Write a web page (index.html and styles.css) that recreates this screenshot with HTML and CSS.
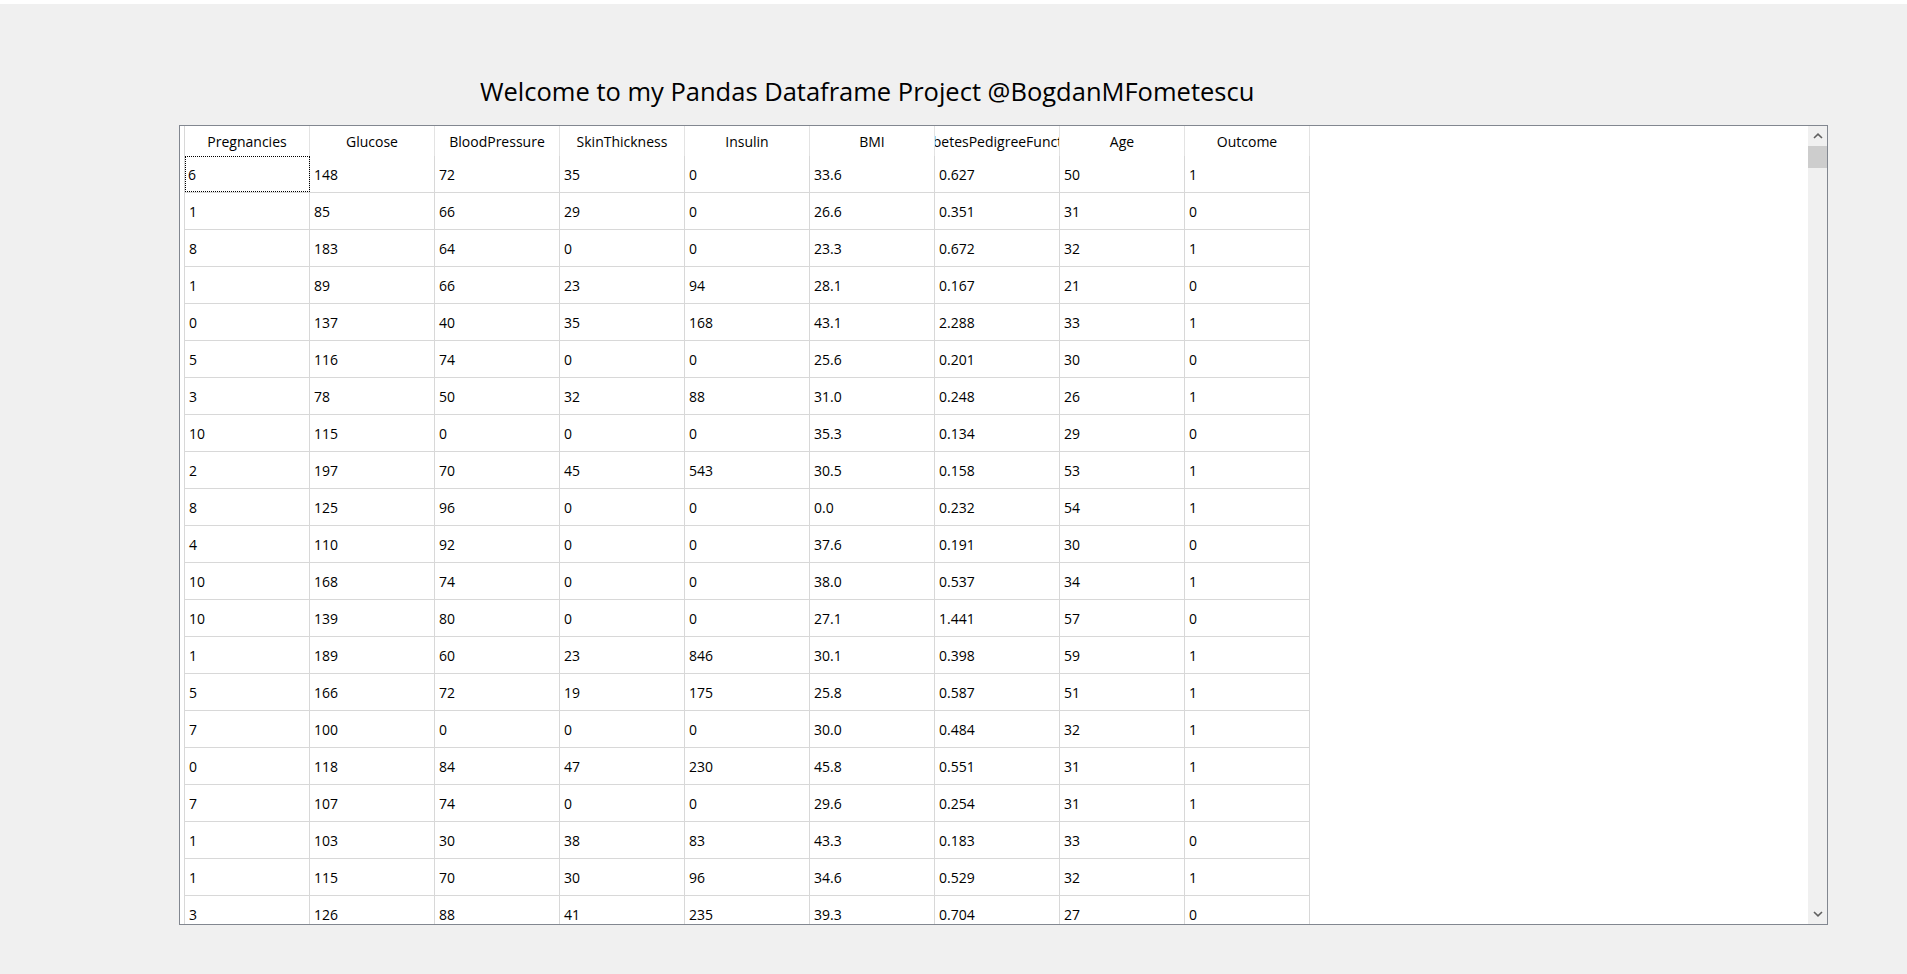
FILE: index.html
```html
<!DOCTYPE html>
<html>
<head>
<meta charset="utf-8">
<title>Pandas Dataframe</title>
<link rel="stylesheet" href="styles.css">
</head>
<body>
<div class="topbar"></div>
<h1 class="title">Welcome to my Pandas Dataframe Project @BogdanMFometescu</h1>
<div class="view">
  <div class="viewport">
    <div class="grid">
      <div class="hrow">
        <div class="hcell"><span>Pregnancies</span></div>
        <div class="hcell"><span>Glucose</span></div>
        <div class="hcell"><span>BloodPressure</span></div>
        <div class="hcell"><span>SkinThickness</span></div>
        <div class="hcell"><span>Insulin</span></div>
        <div class="hcell"><span>BMI</span></div>
        <div class="hcell"><span>DiabetesPedigreeFunction</span></div>
        <div class="hcell"><span>Age</span></div>
        <div class="hcell"><span>Outcome</span></div>
      </div>
      <div class="row"><div class="cell focus">6</div><div class="cell">148</div><div class="cell">72</div><div class="cell">35</div><div class="cell">0</div><div class="cell">33.6</div><div class="cell">0.627</div><div class="cell">50</div><div class="cell">1</div></div>
      <div class="row"><div class="cell">1</div><div class="cell">85</div><div class="cell">66</div><div class="cell">29</div><div class="cell">0</div><div class="cell">26.6</div><div class="cell">0.351</div><div class="cell">31</div><div class="cell">0</div></div>
      <div class="row"><div class="cell">8</div><div class="cell">183</div><div class="cell">64</div><div class="cell">0</div><div class="cell">0</div><div class="cell">23.3</div><div class="cell">0.672</div><div class="cell">32</div><div class="cell">1</div></div>
      <div class="row"><div class="cell">1</div><div class="cell">89</div><div class="cell">66</div><div class="cell">23</div><div class="cell">94</div><div class="cell">28.1</div><div class="cell">0.167</div><div class="cell">21</div><div class="cell">0</div></div>
      <div class="row"><div class="cell">0</div><div class="cell">137</div><div class="cell">40</div><div class="cell">35</div><div class="cell">168</div><div class="cell">43.1</div><div class="cell">2.288</div><div class="cell">33</div><div class="cell">1</div></div>
      <div class="row"><div class="cell">5</div><div class="cell">116</div><div class="cell">74</div><div class="cell">0</div><div class="cell">0</div><div class="cell">25.6</div><div class="cell">0.201</div><div class="cell">30</div><div class="cell">0</div></div>
      <div class="row"><div class="cell">3</div><div class="cell">78</div><div class="cell">50</div><div class="cell">32</div><div class="cell">88</div><div class="cell">31.0</div><div class="cell">0.248</div><div class="cell">26</div><div class="cell">1</div></div>
      <div class="row"><div class="cell">10</div><div class="cell">115</div><div class="cell">0</div><div class="cell">0</div><div class="cell">0</div><div class="cell">35.3</div><div class="cell">0.134</div><div class="cell">29</div><div class="cell">0</div></div>
      <div class="row"><div class="cell">2</div><div class="cell">197</div><div class="cell">70</div><div class="cell">45</div><div class="cell">543</div><div class="cell">30.5</div><div class="cell">0.158</div><div class="cell">53</div><div class="cell">1</div></div>
      <div class="row"><div class="cell">8</div><div class="cell">125</div><div class="cell">96</div><div class="cell">0</div><div class="cell">0</div><div class="cell">0.0</div><div class="cell">0.232</div><div class="cell">54</div><div class="cell">1</div></div>
      <div class="row"><div class="cell">4</div><div class="cell">110</div><div class="cell">92</div><div class="cell">0</div><div class="cell">0</div><div class="cell">37.6</div><div class="cell">0.191</div><div class="cell">30</div><div class="cell">0</div></div>
      <div class="row"><div class="cell">10</div><div class="cell">168</div><div class="cell">74</div><div class="cell">0</div><div class="cell">0</div><div class="cell">38.0</div><div class="cell">0.537</div><div class="cell">34</div><div class="cell">1</div></div>
      <div class="row"><div class="cell">10</div><div class="cell">139</div><div class="cell">80</div><div class="cell">0</div><div class="cell">0</div><div class="cell">27.1</div><div class="cell">1.441</div><div class="cell">57</div><div class="cell">0</div></div>
      <div class="row"><div class="cell">1</div><div class="cell">189</div><div class="cell">60</div><div class="cell">23</div><div class="cell">846</div><div class="cell">30.1</div><div class="cell">0.398</div><div class="cell">59</div><div class="cell">1</div></div>
      <div class="row"><div class="cell">5</div><div class="cell">166</div><div class="cell">72</div><div class="cell">19</div><div class="cell">175</div><div class="cell">25.8</div><div class="cell">0.587</div><div class="cell">51</div><div class="cell">1</div></div>
      <div class="row"><div class="cell">7</div><div class="cell">100</div><div class="cell">0</div><div class="cell">0</div><div class="cell">0</div><div class="cell">30.0</div><div class="cell">0.484</div><div class="cell">32</div><div class="cell">1</div></div>
      <div class="row"><div class="cell">0</div><div class="cell">118</div><div class="cell">84</div><div class="cell">47</div><div class="cell">230</div><div class="cell">45.8</div><div class="cell">0.551</div><div class="cell">31</div><div class="cell">1</div></div>
      <div class="row"><div class="cell">7</div><div class="cell">107</div><div class="cell">74</div><div class="cell">0</div><div class="cell">0</div><div class="cell">29.6</div><div class="cell">0.254</div><div class="cell">31</div><div class="cell">1</div></div>
      <div class="row"><div class="cell">1</div><div class="cell">103</div><div class="cell">30</div><div class="cell">38</div><div class="cell">83</div><div class="cell">43.3</div><div class="cell">0.183</div><div class="cell">33</div><div class="cell">0</div></div>
      <div class="row"><div class="cell">1</div><div class="cell">115</div><div class="cell">70</div><div class="cell">30</div><div class="cell">96</div><div class="cell">34.6</div><div class="cell">0.529</div><div class="cell">32</div><div class="cell">1</div></div>
      <div class="row"><div class="cell">3</div><div class="cell">126</div><div class="cell">88</div><div class="cell">41</div><div class="cell">235</div><div class="cell">39.3</div><div class="cell">0.704</div><div class="cell">27</div><div class="cell">0</div></div>
    </div>
  </div>
  <div class="vscroll">
    <div class="sarrow"><svg width="10" height="6" viewBox="0 0 10 6"><polyline points="1,5 5,1.2 9,5" fill="none" stroke="#606060" stroke-width="1.6"/></svg></div>
    <div class="strack"><div class="sthumb"></div></div>
    <div class="sarrow"><svg width="10" height="6" viewBox="0 0 10 6"><polyline points="1,1 5,4.8 9,1" fill="none" stroke="#606060" stroke-width="1.6"/></svg></div>
  </div>
</div>
</body>
</html>
```
FILE: styles.css
```css
html, body {
  margin: 0;
  padding: 0;
  background: #f0f0f0;
}
body {
  font-family: "Open Sans", "Noto Sans", sans-serif;
  color: #000;
}
.topbar {
  height: 4px;
  background: #ffffff;
}
.title {
  margin: 70px 0 0 0;
  padding-left: 480px;
  height: 34px;
  font-size: 25.5px;
  line-height: 34px;
  font-weight: 400;
  white-space: nowrap;
}
.view {
  margin: 17px 0 0 179px;
  width: 1649px;
  height: 800px;
  box-sizing: border-box;
  border: 1px solid #828790;
  background: #fff;
  display: flex;
}
.viewport {
  flex: 1;
  overflow: hidden;
  padding-left: 4px;
}
.grid {
  width: 1126px;
  box-sizing: border-box;
  border-left: 1px solid #d8d8d8;
  font-size: 14px;
}
.hrow {
  display: flex;
  height: 30px;
}
.hcell {
  width: 125px;
  flex: none;
  box-sizing: border-box;
  border-right: 1px solid #e3e3e3;
  display: flex;
  justify-content: center;
  align-items: center;
  overflow: hidden;
  white-space: nowrap;
  padding: 0 2px;
}
.row {
  display: flex;
  height: 37px;
  box-sizing: border-box;
  border-bottom: 1px solid #d8d8d8;
}
.cell {
  width: 125px;
  flex: none;
  box-sizing: border-box;
  border-right: 1px solid #d8d8d8;
  display: flex;
  align-items: center;
  padding: 0 0 0 4px;
  white-space: nowrap;
}
.cell.focus {
  outline: 1px dotted #000;
  outline-offset: -1px;
  padding-left: 3px;
}
.vscroll {
  width: 19px;
  flex: none;
  background: #f0f0f0;
  display: flex;
  flex-direction: column;
}
.sarrow {
  height: 20px;
  display: flex;
  align-items: center;
  justify-content: center;
}
.strack {
  flex: 1;
}
.sthumb {
  height: 22px;
  background: #cdcdcd;
}
```
